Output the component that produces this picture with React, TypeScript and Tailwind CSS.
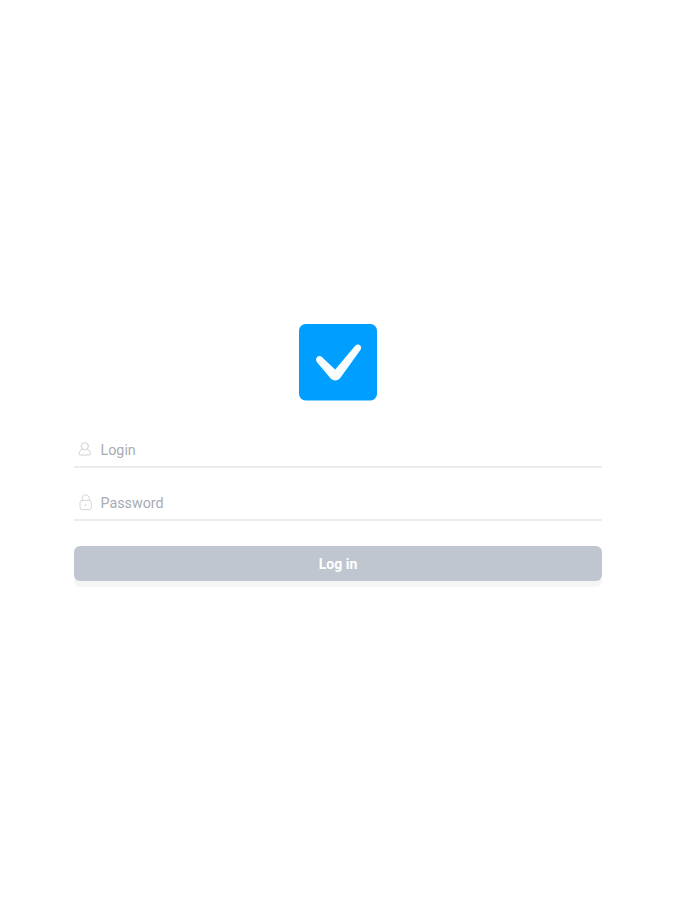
import { useState } from 'react';
import type { FormEvent, ReactNode } from 'react';

function Logo() {
    return (
        <svg width="78" height="77" viewBox="0 0 78 77" fill="none" aria-hidden="true">
            <rect width="78" height="76.5" rx="6.5" fill="#009fff" />
            <path
                d="M17.2 34.6C18.8 31.2 22.3 31.4 24.4 34.6L36.2 45.5L56.2 21.8C59.2 18.6 63.6 21.8 61.6 25.8L41.6 53.4C39 57.2 34.2 57.4 31 53.8L18 38.2C17.1 37 16.9 35.8 17.2 34.6Z"
                fill="#f7fcff"
            />
        </svg>
    );
}

function UserIcon() {
    return (
        <svg width="14" height="15" viewBox="0 0 14 15" fill="none" stroke="#cdd0d5" strokeLinecap="round" strokeLinejoin="round">
            <circle cx="6.8" cy="4.3" r="3.6" />
            <path d="M3.9 7.2C2.2 8.2 1.2 9.7 1.1 11.8C1.1 12.7 1.5 13 2.6 13H10.9C12 13 12.4 12.7 12.4 11.8C12.3 9.7 11.3 8.2 9.6 7.2" />
        </svg>
    );
}

function LockIcon() {
    return (
        <svg width="15" height="17" viewBox="0 0 15 17" fill="none" stroke="#d3d6da" strokeLinecap="round" strokeLinejoin="round">
            <path d="M4.2 6.3V4.3C4.2 2.2 5.6 1 7.7 1C9.8 1 11.2 2.2 11.2 4.3V6.3" />
            <rect x="2" y="6.3" width="11.3" height="9.3" rx="2.2" />
            <path d="M7.7 10.3V11.8" />
        </svg>
    );
}

interface FieldProps {
    icon: ReactNode;
    type: string;
    label: string;
    value: string;
    onChange: (value: string) => void;
}

function Field({ icon, type, label, value, onChange }: FieldProps) {
    return (
        <label className="flex h-[35px] items-center border-b-2 border-[#ebebed] pl-1">
            <span className="flex w-[22.5px] shrink-0 items-center">{icon}</span>
            <input
                type={type}
                value={value}
                placeholder={label}
                aria-label={label}
                onChange={(event) => onChange(event.target.value)}
                className="min-w-0 flex-1 bg-transparent pt-px text-[14.3px] leading-[19px] text-slate-700 outline-none placeholder:text-[#a7acb3]"
            />
        </label>
    );
}

export default function App() {
    const [login, setLogin] = useState('');
    const [password, setPassword] = useState('');

    function handleSubmit(event: FormEvent) {
        event.preventDefault();
    }

    return (
        <main className="min-h-screen bg-white pr-[73px] pl-[74px] pt-[324px] font-[Roboto,sans-serif]">
            <div className="flex justify-center">
                <Logo />
            </div>

            <form onSubmit={handleSubmit} className="mt-8 flex flex-col">
                <Field icon={<UserIcon />} type="text" label="Login" value={login} onChange={setLogin} />
                <div className="mt-[18px]">
                    <Field icon={<LockIcon />} type="password" label="Password" value={password} onChange={setPassword} />
                </div>
                <button
                    type="submit"
                    className="mt-[25px] h-[35px] rounded-md bg-[#c0c6d0] text-sm font-bold text-white shadow-[0_6px_2px_0_#f5f5f6]"
                >
                    Log in
                </button>
            </form>
        </main>
    );
}
